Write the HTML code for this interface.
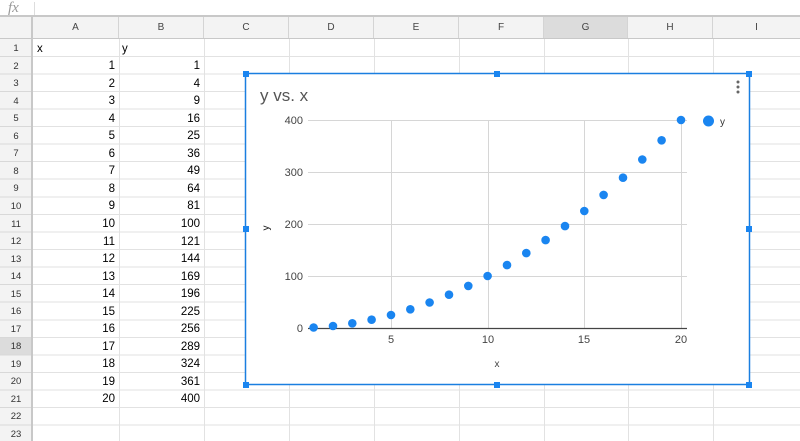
<!DOCTYPE html>
<html><head><meta charset="utf-8"><style>
*{margin:0;padding:0;box-sizing:border-box}
body{width:800px;height:441px;overflow:hidden;background:#fff;font-family:"Liberation Sans",Arial,sans-serif;position:relative}
.a{position:absolute}
.fb{left:0;top:0;width:800px;height:17px;background:#fff;border-bottom:2px solid #c8c8c8}
.hdr{left:0;top:17px;width:800px;height:22px;background:#f3f3f3;border-bottom:1px solid #c8c8c8}
.ch{position:absolute;top:0;height:21px;line-height:21px;font-size:10px;color:#444;text-align:center;border-right:1px solid #d4d4d4}
.rh{position:absolute;left:0;width:33px;background:#f3f3f3;border-right:2px solid #c8c8c8;border-bottom:1px solid #d8d8d8;font-size:9.5px;color:#333;text-align:center}
.c{position:absolute;font-size:11.5px;color:#000}
.r{text-align:right}
</style></head><body>
<div class="a fb"><span class="a" style="left:8px;top:0px;font-family:'Liberation Serif',serif;font-style:italic;font-size:15px;color:#999">fx</span><div class="a" style="left:34px;top:2px;width:1px;height:13px;background:#ddd"></div></div>
<div class="a hdr">
<div class="ch" style="left:0;width:33px;border-right:2px solid #c8c8c8"></div>
<div class="ch" style="left:33px;width:86px">A</div>
<div class="ch" style="left:119px;width:85px">B</div>
<div class="ch" style="left:204px;width:85px">C</div>
<div class="ch" style="left:289px;width:85px">D</div>
<div class="ch" style="left:374px;width:85px">E</div>
<div class="ch" style="left:459px;width:85px">F</div>
<div class="ch" style="left:544px;width:84px;background:#dcdcdc">G</div>
<div class="ch" style="left:628px;width:85px">H</div>
<div class="ch" style="left:713px;width:87px;border:none">I</div>
</div>
<svg class="a" style="left:0;top:0" width="800" height="441">
<g stroke="#e2e2e2" stroke-width="1">
<line x1="119.5" y1="39" x2="119.5" y2="441"/><line x1="204.5" y1="39" x2="204.5" y2="441"/><line x1="289.5" y1="39" x2="289.5" y2="441"/><line x1="374.5" y1="39" x2="374.5" y2="441"/><line x1="459.5" y1="39" x2="459.5" y2="441"/><line x1="544.5" y1="39" x2="544.5" y2="441"/><line x1="628.5" y1="39" x2="628.5" y2="441"/><line x1="713.5" y1="39" x2="713.5" y2="441"/>
<line x1="33" y1="56.5" x2="800" y2="56.5"/><line x1="33" y1="74" x2="800" y2="74"/><line x1="33" y1="91.5" x2="800" y2="91.5"/><line x1="33" y1="109" x2="800" y2="109"/><line x1="33" y1="126.5" x2="800" y2="126.5"/><line x1="33" y1="144" x2="800" y2="144"/><line x1="33" y1="161.5" x2="800" y2="161.5"/><line x1="33" y1="179" x2="800" y2="179"/><line x1="33" y1="197" x2="800" y2="197"/><line x1="33" y1="214.5" x2="800" y2="214.5"/><line x1="33" y1="232" x2="800" y2="232"/><line x1="33" y1="249.5" x2="800" y2="249.5"/><line x1="33" y1="267" x2="800" y2="267"/><line x1="33" y1="284.5" x2="800" y2="284.5"/><line x1="33" y1="302" x2="800" y2="302"/><line x1="33" y1="320" x2="800" y2="320"/><line x1="33" y1="337.5" x2="800" y2="337.5"/><line x1="33" y1="355" x2="800" y2="355"/><line x1="33" y1="372.5" x2="800" y2="372.5"/><line x1="33" y1="390" x2="800" y2="390"/><line x1="33" y1="407.5" x2="800" y2="407.5"/><line x1="33" y1="425" x2="800" y2="425"/>
</g>
<g fill="#f3f3f3">
<rect x="0" y="39" width="33" height="402"/>
</g>
<rect x="0" y="337.5" width="33" height="17.5" fill="#dcdcdc"/>
<line x1="32" y1="39" x2="32" y2="441" stroke="#c8c8c8" stroke-width="2"/>
<g stroke="#d8d8d8"><line x1="0" y1="56.5" x2="31" y2="56.5"/><line x1="0" y1="74" x2="31" y2="74"/><line x1="0" y1="91.5" x2="31" y2="91.5"/><line x1="0" y1="109" x2="31" y2="109"/><line x1="0" y1="126.5" x2="31" y2="126.5"/><line x1="0" y1="144" x2="31" y2="144"/><line x1="0" y1="161.5" x2="31" y2="161.5"/><line x1="0" y1="179" x2="31" y2="179"/><line x1="0" y1="197" x2="31" y2="197"/><line x1="0" y1="214.5" x2="31" y2="214.5"/><line x1="0" y1="232" x2="31" y2="232"/><line x1="0" y1="249.5" x2="31" y2="249.5"/><line x1="0" y1="267" x2="31" y2="267"/><line x1="0" y1="284.5" x2="31" y2="284.5"/><line x1="0" y1="302" x2="31" y2="302"/><line x1="0" y1="320" x2="31" y2="320"/><line x1="0" y1="337.5" x2="31" y2="337.5"/><line x1="0" y1="355" x2="31" y2="355"/><line x1="0" y1="372.5" x2="31" y2="372.5"/><line x1="0" y1="390" x2="31" y2="390"/><line x1="0" y1="407.5" x2="31" y2="407.5"/><line x1="0" y1="425" x2="31" y2="425"/></g>
<g font-size="9.5" fill="#333" text-anchor="middle" font-family="Liberation Sans">
<text x="16" y="51">1</text><text x="16" y="69">2</text><text x="16" y="86">3</text><text x="16" y="104">4</text><text x="16" y="121">5</text><text x="16" y="139">6</text><text x="16" y="156">7</text><text x="16" y="174">8</text><text x="16" y="191">9</text><text x="16" y="209">10</text><text x="16" y="227">11</text><text x="16" y="244">12</text><text x="16" y="262">13</text><text x="16" y="279">14</text><text x="16" y="297">15</text><text x="16" y="314">16</text><text x="16" y="332">17</text><text x="16" y="349">18</text><text x="16" y="367">19</text><text x="16" y="384">20</text><text x="16" y="402">21</text><text x="16" y="419">22</text><text x="16" y="437">23</text>
</g>
<g font-size="11.5" fill="#000" font-family="Liberation Sans">
<text x="37" y="52">x</text><text x="122" y="52">y</text>
</g>
<g font-size="11.5" fill="#000" text-anchor="end" font-family="Liberation Sans">
<text x="115" y="69">1</text><text x="115" y="87">2</text><text x="115" y="104">3</text><text x="115" y="122">4</text><text x="115" y="139">5</text><text x="115" y="157">6</text><text x="115" y="174">7</text><text x="115" y="192">8</text><text x="115" y="209">9</text><text x="115" y="227">10</text><text x="115" y="245">11</text><text x="115" y="262">12</text><text x="115" y="280">13</text><text x="115" y="297">14</text><text x="115" y="315">15</text><text x="115" y="332">16</text><text x="115" y="350">17</text><text x="115" y="367">18</text><text x="115" y="385">19</text><text x="115" y="402">20</text>
<text x="200" y="69">1</text><text x="200" y="87">4</text><text x="200" y="104">9</text><text x="200" y="122">16</text><text x="200" y="139">25</text><text x="200" y="157">36</text><text x="200" y="174">49</text><text x="200" y="192">64</text><text x="200" y="209">81</text><text x="200" y="227">100</text><text x="200" y="245">121</text><text x="200" y="262">144</text><text x="200" y="280">169</text><text x="200" y="297">196</text><text x="200" y="315">225</text><text x="200" y="332">256</text><text x="200" y="350">289</text><text x="200" y="367">324</text><text x="200" y="385">361</text><text x="200" y="402">400</text>
</g>
<!-- chart -->
<rect x="245.5" y="73.5" width="504" height="311" fill="#fff" stroke="#1a7fe0" stroke-width="1.5"/>
<text x="260" y="101" font-size="17" fill="#555" font-family="Liberation Sans">y vs. x</text>
<g fill="#666"><circle cx="738" cy="82" r="1.5"/><circle cx="738" cy="87" r="1.5"/><circle cx="738" cy="92" r="1.5"/></g>
<g stroke="#d6d6d6" stroke-width="1">
<line x1="308" y1="120.5" x2="687" y2="120.5"/><line x1="308" y1="172.5" x2="687" y2="172.5"/><line x1="308" y1="224.5" x2="687" y2="224.5"/><line x1="308" y1="276.5" x2="687" y2="276.5"/>
<line x1="391.5" y1="120" x2="391.5" y2="328"/><line x1="488.5" y1="120" x2="488.5" y2="328"/><line x1="584.5" y1="120" x2="584.5" y2="328"/><line x1="681.5" y1="120" x2="681.5" y2="328"/>
</g>
<line x1="308" y1="328.5" x2="687" y2="328.5" stroke="#444" stroke-width="1.2"/>
<g font-size="11" fill="#444" text-anchor="end" font-family="Liberation Sans">
<text x="303" y="124">400</text><text x="303" y="176">300</text><text x="303" y="228">200</text><text x="303" y="280">100</text><text x="303" y="332">0</text>
</g>
<g font-size="11" fill="#444" text-anchor="middle" font-family="Liberation Sans">
<text x="391" y="343">5</text><text x="488" y="343">10</text><text x="584" y="343">15</text><text x="681" y="343">20</text>
<text x="497" y="367" font-size="10">x</text>
</g>
<text x="0" y="0" font-size="10" fill="#222" text-anchor="middle" font-family="Liberation Sans" transform="translate(269,228) rotate(-90)">y</text>
<g fill="#1a85f0">
<circle cx="313.6" cy="327.5" r="4.3"/><circle cx="333" cy="326" r="4.3"/><circle cx="352.3" cy="323.3" r="4.3"/><circle cx="371.6" cy="319.7" r="4.3"/><circle cx="391" cy="315" r="4.3"/><circle cx="410.3" cy="309.3" r="4.3"/><circle cx="429.6" cy="302.5" r="4.3"/><circle cx="449" cy="294.7" r="4.3"/><circle cx="468.3" cy="285.9" r="4.3"/><circle cx="487.6" cy="276" r="4.3"/><circle cx="507" cy="265.1" r="4.3"/><circle cx="526.3" cy="253.1" r="4.3"/><circle cx="545.6" cy="240.1" r="4.3"/><circle cx="565" cy="226.1" r="4.3"/><circle cx="584.3" cy="211" r="4.3"/><circle cx="603.6" cy="194.9" r="4.3"/><circle cx="623" cy="177.7" r="4.3"/><circle cx="642.3" cy="159.5" r="4.3"/><circle cx="661.6" cy="140.3" r="4.3"/><circle cx="681" cy="120" r="4.3"/>
<circle cx="708.5" cy="121" r="5.5"/>
</g>
<text x="720" y="125" font-size="10" fill="#333" font-family="Liberation Sans">y</text>
<g fill="#1a85f0">
<rect x="243" y="71" width="6" height="6"/><rect x="494" y="71" width="6" height="6"/><rect x="746" y="71" width="6" height="6"/>
<rect x="243" y="226" width="6" height="6"/><rect x="746" y="226" width="6" height="6"/>
<rect x="243" y="382" width="6" height="6"/><rect x="494" y="382" width="6" height="6"/><rect x="746" y="382" width="6" height="6"/>
</g>
</svg>
</body></html>
